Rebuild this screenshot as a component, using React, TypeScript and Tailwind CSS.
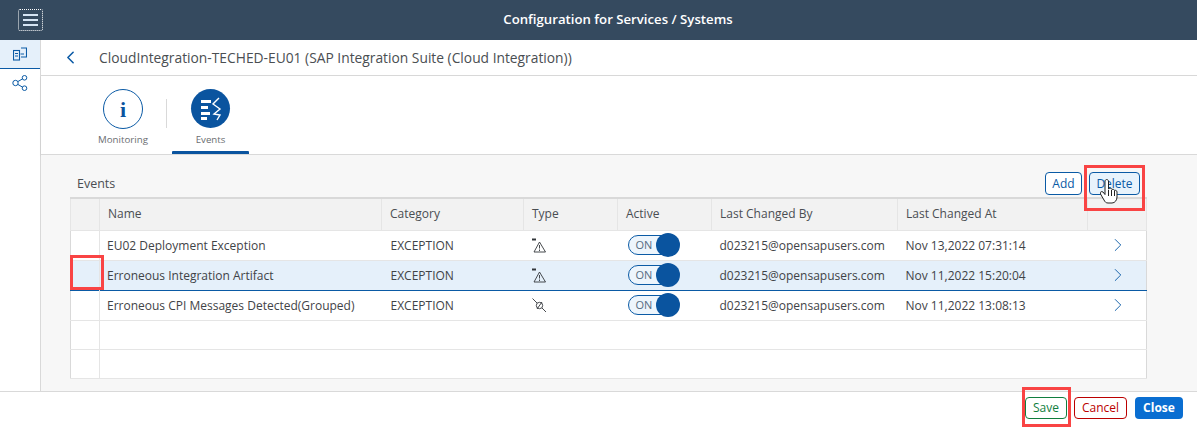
import { ChevronLeft, ChevronRight } from "lucide-react"

const rows = [
  { name: "EU02 Deployment Exception", type: "alert", by: "d023215@opensapusers.com", at: "Nov 13,2022 07:31:14" },
  { name: "Erroneous Integration Artifact", type: "alert", by: "d023215@opensapusers.com", at: "Nov 11,2022 15:20:04", selected: true },
  { name: "Erroneous CPI Messages Detected(Grouped)", type: "link", by: "d023215@opensapusers.com", at: "Nov 11,2022 13:08:13" },
]

function AlertType() {
  return (
    <svg width="15" height="15" viewBox="0 0 15 15" fill="none" stroke="#32363a" strokeWidth="1">
      <path d="M0 1.500h4" strokeWidth="2" />
      <path d="M7.500 4 L13.500 14 H2 Z" strokeWidth="0.9" />
      <path d="M7.500 7v3.500M7.500 11.500v1.500" strokeWidth="0.9" />
    </svg>
  )
}

function LinkType() {
  return (
    <svg width="15" height="15" viewBox="0 0 15 15" fill="none" stroke="#32363a" strokeWidth="0.9">
      <path d="M0.500 0.500 L5 5M10 10 L14 14" />
      <circle cx="7.500" cy="7.500" r="3.200" />
      <path d="M5 11 L10 4" />
    </svg>
  )
}

function Toggle() {
  return (
    <div className="relative flex h-[20px] w-[50px] items-center rounded-full border border-[#0a5aa5] bg-[#edf5fc] pl-[7px] text-[11px] text-[#556b82]">
      ON
      <span className="absolute right-[-3px] top-[-3px] h-[24px] w-[24px] rounded-full bg-[#0a549f]" />
    </div>
  )
}

function EventsIcon() {
  return (
    <svg width="24" height="24" viewBox="0 0 24 24" fill="none">
      <path d="M2 3h10v3H2zM2 9h7v3H2zM2 15h9v3H2zM2 20h6v3H2z" fill="#fff" />
      <path d="M20 1 L14 7 L21 12 L15 17 L21 18 L18 23" stroke="#fff" strokeWidth="1.400" />
    </svg>
  )
}

export default function App() {
  return (
    <div className="flex h-[427px] w-[1197px] flex-col overflow-hidden bg-white font-['Open_Sans','Noto_Sans',sans-serif] text-[#32363a]">
      <header className="relative flex h-10 shrink-0 items-center justify-center bg-[#354a5f] pl-[39px]">
        <button className="absolute left-[18px] top-[9px] flex h-[22px] w-[25px] flex-col items-center justify-center gap-[3px] rounded-[2px] border border-dotted border-white">
          <span className="h-[2px] w-[15px] bg-[#d5e4f3]" />
          <span className="h-[2px] w-[15px] bg-[#d5e4f3]" />
          <span className="h-[2px] w-[15px] bg-[#d5e4f3]" />
        </button>
        <h1 className="text-[13.2px] font-semibold text-white">Configuration for Services / Systems</h1>
      </header>

      <div className="flex min-h-0 flex-1">
        <aside className="flex w-[41px] shrink-0 flex-col border-r border-[#d9d9d9]">
          <div className="flex h-[29px] items-center justify-center border-b-[1.5px] border-[#0a5aa5] bg-[#e5f0fa]">
            <svg width="14" height="14" viewBox="0 0 14 14" fill="none" stroke="#0a5aa5" strokeWidth="1.100">
              <rect x="0.500" y="3.500" width="6" height="9.500" />
              <path d="M8 1h5.500v9H8M2 6.500h3M2 9h3M7.500 7h3.500" />
            </svg>
          </div>
          <div className="flex h-[28px] items-center justify-center">
            <svg width="16" height="16" viewBox="0 0 16 16" fill="none" stroke="#0a5aa5" strokeWidth="1">
              <circle cx="3.500" cy="8" r="2.700" />
              <circle cx="12.500" cy="2.800" r="2.300" />
              <circle cx="12.500" cy="13.200" r="2.300" />
              <path d="M5.800 6.600 L10.500 3.900M5.800 9.400 L10.500 12.100" />
            </svg>
          </div>
        </aside>

        <main className="flex min-w-0 flex-1 flex-col">
          <div className="flex h-9 shrink-0 items-center border-b border-[#d9d9d9] pl-[19px]">
            <ChevronLeft size={21} strokeWidth={1.800} color="#0a5aa5" />
            <span className="ml-[18px] pt-[2px] text-[13.8px] text-[#4a4e52]">CloudIntegration-TECHED-EU01 (SAP Integration Suite (Cloud Integration))</span>
          </div>

          <div className="flex h-[79px] shrink-0 items-start border-b border-[#d9d9d9] pl-[57px] pt-[13px] shadow-[0_1px_2px_rgba(0,0,0,0.1)]">
            <div className="flex w-[50px] flex-col items-center">
              <div className="flex h-[40px] w-[40px] items-center justify-center rounded-full border border-[#0a5aa5] font-['Liberation_Serif',serif] text-[22px] font-bold text-[#0a549f]">i</div>
              <span className="mt-[4px] text-[9.7px] text-[#6a6d70]">Monitoring</span>
            </div>
            <div className="ml-[18px] mt-[10px] h-[29px] w-px bg-[#d9d9d9]" />
            <div className="relative ml-[5px] flex h-[65px] w-[77px] flex-col items-center">
              <div className="flex h-[39px] w-[39px] items-center justify-center rounded-full bg-[#0a549f]">
                <EventsIcon />
              </div>
              <span className="mt-[5px] text-[9.7px] text-[#6a6d70]">Events</span>
              <span className="absolute bottom-0 left-0 right-0 h-[3px] rounded-t-[1px] bg-[#0a549f]" />
            </div>
          </div>

          <div className="flex min-h-0 flex-1 flex-col bg-[#f7f7f7] pl-[29px] pr-[51px] pt-[17px]">
            <div className="flex h-[25px] shrink-0 items-start justify-between">
              <span className="pl-[7px] pt-[3px] text-[12.5px] text-[#4a4e52]">Events</span>
              <div className="mr-[6px] flex gap-[7px]">
                <button className="h-[23px] w-[37px] rounded-[4px] border border-[#0a5aa5] bg-white text-[12px] text-[#0a5aa5]">Add</button>
                <button className="h-[23px] w-[51px] rounded-[4px] border border-[#0a5aa5] bg-[#e8f3fc] text-[12px] text-[#0a5aa5]">Delete</button>
              </div>
            </div>

            <table className="w-[1077px] table-fixed border-collapse border border-[#d9d9d9] bg-white text-[12px] text-[#3f4347]">
              <colgroup>
                <col className="w-[29px]" />
                <col className="w-[282px]" />
                <col className="w-[142px]" />
                <col className="w-[94px]" />
                <col className="w-[94px]" />
                <col className="w-[186px]" />
                <col className="w-[190px]" />
                <col />
              </colgroup>
              <thead>
                <tr className="h-[32px] border-t-2 border-[#d9d9d9] bg-[#f2f2f2] text-left text-[#4a4e52]">
                  {["", "Name", "Category", "Type", "Active", "Last Changed By", "Last Changed At", ""].map((h, i) => (
                    <th key={i} className="border border-[#e5e5e5] pl-[8px] font-normal">{h}</th>
                  ))}
                </tr>
              </thead>
              <tbody>
                {rows.map((r) => (
                  <tr key={r.name} className={r.selected ? "h-[30px] border-b border-[#0a5aa5] bg-[#e5f0fa]" : "h-[30px] border-b border-[#e5e5e5]"}>
                    <td className="border-r border-[#e5e5e5]" />
                    <td className="pl-[7px] pt-[2px]">{r.name}</td>
                    <td className="pl-[9px] pt-[2px]">EXCEPTION</td>
                    <td className="pl-[8px]">{r.type === "alert" ? <AlertType /> : <LinkType />}</td>
                    <td className="pl-[10px]"><Toggle /></td>
                    <td className="pl-[8px] pt-[2px]">{r.by}</td>
                    <td className="pl-[8px] pt-[2px]">{r.at}</td>
                    <td className="pl-[19px]"><ChevronRight size={22} strokeWidth={1} color="#0a5aa5" /></td>
                  </tr>
                ))}
                {[0, 1].map((i) => (
                  <tr key={i} className="h-[29px] border-b border-[#e5e5e5]">
                    <td className="border-r border-[#e5e5e5]" />
                    <td colSpan={7} />
                  </tr>
                ))}
              </tbody>
            </table>
          </div>
        </main>
      </div>

      <footer className="flex h-[36px] shrink-0 items-center justify-end border-t border-[#d9d9d9] pb-[3px] pr-[14px] text-[12px]">
        <button className="h-[22px] w-[42px] rounded-[4px] border border-[#107e3e] text-[#107e3e]">Save</button>
        <button className="ml-[7px] h-[22px] w-[53px] rounded-[4px] border border-[#bb0000] text-[#bb0000]">Cancel</button>
        <button className="ml-[8px] h-[22px] w-[48px] rounded-[4px] bg-[#0a6ed1] font-bold text-white">Close</button>
      </footer>

      {/* callouts drawn on top of the screenshot */}
      <div className="absolute left-[70px] top-[255px] h-[35px] w-[34px] border-[3px] border-[#f94444]" />
      <div className="absolute left-[1084px] top-[165px] h-[46px] w-[61px] border-[3px] border-[#f94444]" />
      <div className="absolute left-[1022px] top-[387px] h-[40px] w-[49px] border-[3px] border-[#f94444]" />
      <svg className="absolute left-[1100px] top-[179px]" width="20" height="25" viewBox="0 0 20 25">
        <path d="M5 2c.5-2 3-2 3.500 0V10l1-.5c1-.5 2.500 0 2.500 1 1-.5 2.500 0 2.500 1 1-.5 2.500 0 2.500 1.500v5c0 3-2 6-5 6H8c-2 0-3-1-4-3l-3.500-6c-1-2 1-3 2.500-2l2 2.500z" fill="#fff" stroke="#222" strokeWidth="1" />
        <path d="M8.500 11v6M11.500 11v6M14.500 12v5" stroke="#222" strokeWidth="1" />
      </svg>
    </div>
  )
}
